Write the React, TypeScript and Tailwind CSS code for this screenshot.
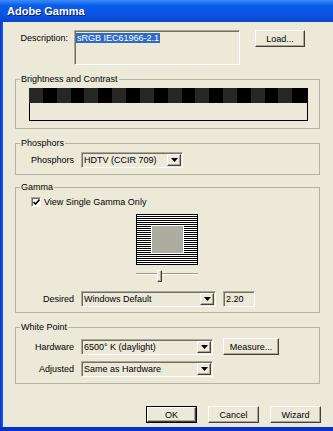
import type { ReactNode } from 'react';

const raised =
  'border border-t-white border-l-white border-r-[#404040] border-b-[#404040] shadow-[inset_-1px_-1px_0_#ACA899] bg-[#ECE9D8]';
const sunken =
  'border border-t-[#ACA899] border-l-[#ACA899] border-r-white border-b-white shadow-[inset_1px_1px_0_#716F64]';

const Arrow = () => (
  <svg width="7" height="4" viewBox="0 0 7 4">
    <path d="M0 0h7L3.5 4z" fill="#000" />
  </svg>
);

const Select = ({ value, width }: { value: string; width: string }) => (
  <div className={`${sunken} ${width} h-[16px] flex items-center`}>
    <span className="flex-1 pl-[2px] leading-[12px] whitespace-nowrap overflow-hidden">{value}</span>
    <div className={`${raised} w-[14px] h-[12px] mr-[1px] flex items-center justify-center`}>
      <Arrow />
    </div>
  </div>
);

const Button = ({ label, width, isDefault }: { label: string; width: string; isDefault?: boolean }) => (
  <div className={`${width} h-[17px] ${isDefault ? 'border border-black' : ''}`}>
    <div className={`${raised} w-full h-full flex items-center justify-center leading-[12px]`}>{label}</div>
  </div>
);

const Group = ({ title, className, children }: { title: string; className: string; children: ReactNode }) => (
  <fieldset className={`ml-[12px] w-[305px] border border-[#B5B3A4] ${className}`}>
    <legend className="ml-[4px] px-[1px] leading-[12px]">{title}</legend>
    {children}
  </fieldset>
);

const Label = ({ text }: { text: string }) => (
  <span className="w-[58px] text-right leading-[12px] mr-[7px]">{text}</span>
);

export default function App() {
  return (
    <div className="w-[333px] h-[431px] flex flex-col bg-[#0A4FDB] font-['Liberation_Sans',Arial,sans-serif] text-[9px] text-black overflow-hidden">
      <div className="h-[22px] shrink-0 flex items-center pl-[7px] bg-[linear-gradient(to_bottom,#3C8CF8_0%,#0A5DEB_25%,#0853E0_70%,#0645C8_100%)]">
        <span className="text-[11px] font-bold text-white [text-shadow:1px_1px_0_#0A1E6E]">Adobe Gamma</span>
      </div>
      <div className="flex flex-1 border-b-[4px] border-b-[#0831C9]">
        <div className="w-[3px] bg-[linear-gradient(to_right,#0831C9,#1663EC)]" />
        <div className="flex-1 flex flex-col bg-[#ECE9D8]">
          {/* description */}
          <div className="flex items-start mt-[8px]">
            <span className="w-[65px] text-right leading-[12px] mt-[2px]">Description:</span>
            <div className={`${sunken} ml-[6px] w-[166px] h-[35px] pl-[1px] pt-[1px]`}>
              <span className="bg-[#316AC5] text-white leading-[12px] px-[1px]">sRGB IEC61966-2.1</span>
            </div>
            <div className="ml-[15px]">
              <Button label="Load..." width="w-[50px]" />
            </div>
          </div>

          <Group title="Brightness and Contrast" className="mt-[8px]">
            <div className="pt-[3px] pl-[13px] pb-[7px]">
              <div className="w-[279px]">
                <div className="h-[15px] bg-black">
                  <div className="w-[264px] h-full bg-[repeating-linear-gradient(90deg,#262826_0px,#262826_14px,#000_14px,#000_27.7px)]" />
                </div>
                <div className="h-[18px] border border-t-0 border-black" />
              </div>
            </div>
          </Group>

          <Group title="Phosphors" className="mt-[8px]">
            <div className="flex items-center pt-[3px] pb-[6px]">
              <Label text="Phosphors" />
              <Select value="HDTV (CCIR 709)" width="w-[102px]" />
            </div>
          </Group>

          <Group title="Gamma" className="mt-[6px]">
            <div className="pt-[4px] pb-[5px]">
              <div className="flex items-center pl-[15px] h-[10px]">
                <div className={`${sunken} w-[10px] h-[10px] bg-white flex items-center justify-center`}>
                  <svg width="7" height="6" viewBox="0 0 7 6">
                    <path d="M0.5 3l2 2 4-4.5" stroke="#000" strokeWidth="1.6" fill="none" />
                  </svg>
                </div>
                <span className="ml-[3px] leading-[12px]">View Single Gamma Only</span>
              </div>
              <div className="ml-[120px] mt-[7px] w-[62px] h-[51px] border-x border-black bg-[repeating-linear-gradient(to_bottom,#000_0px,#000_1px,#fff_1px,#fff_2px)] flex items-center justify-center">
                <div className="w-[31px] h-[27px] bg-[#ADACA0] outline outline-1 outline-white" />
              </div>
              <div className="relative ml-[120px] mt-[4px] w-[62px] h-[13px]">
                <div className="absolute left-0 right-0 top-[4px] h-[2px] border-t border-t-[#9D9B8E] border-b border-b-white" />
                <div className={`absolute left-[21px] top-[1px] w-[5px] h-[12px] ${raised}`} />
              </div>
              <div className="flex items-center mt-[9px]">
                <Label text="Desired" />
                <Select value="Windows Default" width="w-[135px]" />
                <div className={`${sunken} ml-[7px] w-[32px] h-[16px] pl-[2px] leading-[14px]`}>2.20</div>
              </div>
            </div>
          </Group>

          <Group title="White Point" className="mt-[8px]">
            <div className="pt-[5px] pb-[6px]">
              <div className="flex items-center">
                <Label text="Hardware" />
                <Select value="6500° K (daylight)" width="w-[132px]" />
                <div className="ml-[10px]">
                  <Button label="Measure..." width="w-[56px]" />
                </div>
              </div>
              <div className="flex items-center mt-[6px]">
                <Label text="Adjusted" />
                <Select value="Same as Hardware" width="w-[132px]" />
              </div>
            </div>
          </Group>

          <div className="flex justify-end gap-[11px] pr-[12px] mt-[22px]">
            <Button label="OK" width="w-[51px]" isDefault />
            <Button label="Cancel" width="w-[51px]" />
            <Button label="Wizard" width="w-[51px]" />
          </div>
        </div>
      </div>
    </div>
  );
}
